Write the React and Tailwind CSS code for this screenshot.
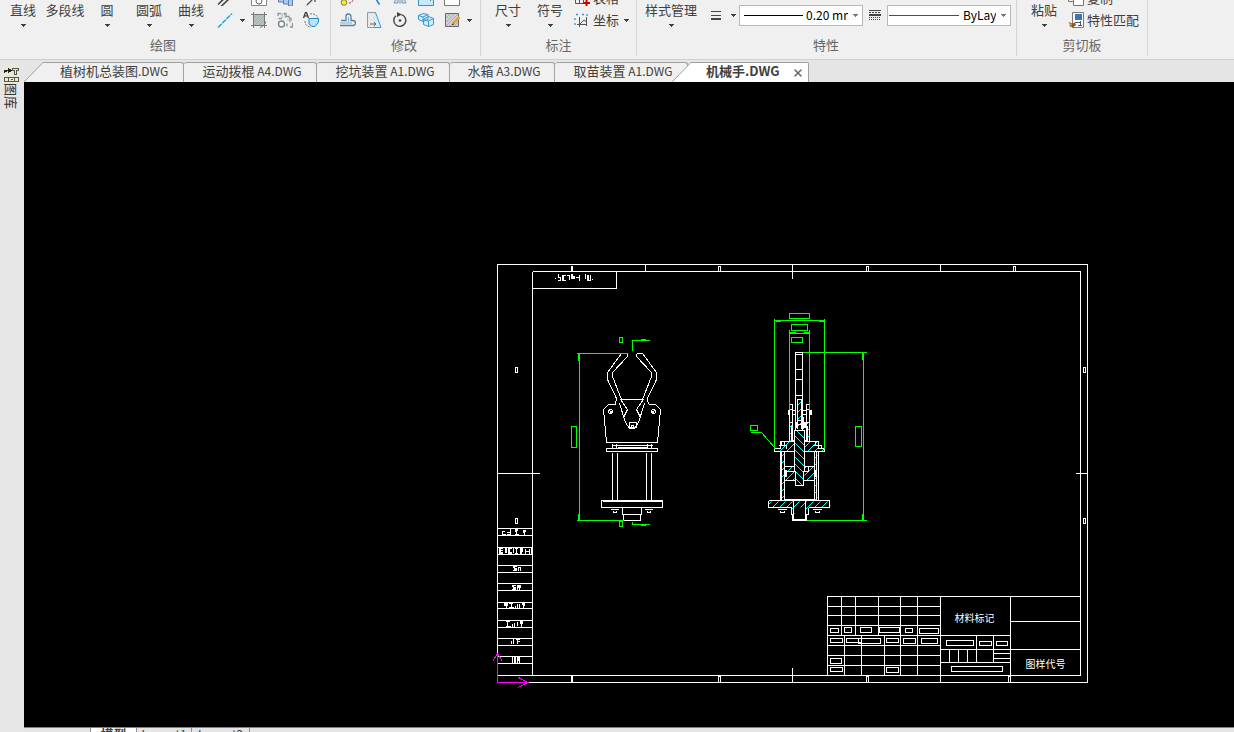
import React, { useState } from 'react';
import { X } from 'lucide-react';

const tabs = [
  { name: '植树机总装图', ext: '.DWG', width: 'w-[140px]' },
  { name: '运动拨棍', ext: ' A4.DWG', width: 'w-[133px]' },
  { name: '挖坑装置', ext: ' A1.DWG', width: 'w-[133px]' },
  { name: '水箱', ext: ' A3.DWG', width: 'w-[105px]' },
  { name: '取苗装置', ext: ' A1.DWG', width: 'w-[133px]' },
];

const Caret = ({ color = '#404040' }) => (
  <svg width="5" height="3" viewBox="0 0 5 3" className="shrink-0" shapeRendering="crispEdges">
    <path d="M0 0h5v1H4v1H3v1H2V2H1V1H0z" fill={color} />
  </svg>
);

const Icon = ({ children }) => (
  <svg width="16" height="16" viewBox="0 0 16 16" fill="none" stroke="#5b6670" className="shrink-0">
    {children}
  </svg>
);

const icons = {
  ray: (
    <Icon><path d="M1 15.500 15 1.500" stroke="#1ba3e0" strokeWidth="1.500" strokeDasharray="5 1" /></Icon>
  ),
  parallel: (
    <Icon><path d="M1 14.500 11 5M4 16.500 13 8" stroke="#444" strokeWidth="1.600" /></Icon>
  ),
  hatch: (
    <Icon>
      <path d="M3 3h10v10H3z" fill="#b9c0c0" stroke="none" />
      <path d="M0 2.500h16M0 13.500h16M2.500 0v16M13.500 0v16" stroke="#777" />
      <path d="M3 6l3-3M3 10l7-7M4 13l9-9M8 13l5-5" stroke="#a3adad" />
      <path d="M9 15.500c3-1 5-3 6-6" stroke="#777" />
    </Icon>
  ),
  wipeout: (
    <Icon>
      <path d="M.5 0v15.500h15V0" fill="#fff" stroke="#888" />
      <circle cx="8" cy="11" r="3" />
    </Icon>
  ),
  blocks: (
    <Icon><path d="M1.500 3v9h5v2h5v2h4V4" fill="#a9cbea" stroke="#5b7fa6" /><path d="M6.500 3v9M11.500 3v11" stroke="#5b7fa6" /></Icon>
  ),
  arrow: (
    <Icon><path d="M4 15 13 6M8 8h4v4" stroke="#444" strokeWidth="1.200" /></Icon>
  ),
  gears: (
    <Icon>
      <path d="M1 4V1.500h3M7 1.500h2v3h3V6M12 6.500h2V9M15.500 11v4H13M10 14.500v-3M1.500 6.500H5" stroke="#8a949b" strokeWidth="1.300" />
      <path d="M5 6V2h3v4M10 8h3v3" stroke="#a0a9af" />
      <circle cx="4.500" cy="12" r="3" fill="#f4f6f7" stroke="#7b858d" strokeWidth="1.400" />
    </Icon>
  ),
  region: (
    <Icon>
      <path d="M7 2c5-1 8 2 8 6M2 9c0 4 3 6 6 6" stroke="#777" strokeDasharray="2 1" />
      <path d="M6 6.500h9.500V10L12 14.500H9L6 12z" fill="#b5e3fa" stroke="#2786bf" />
      <path d="M.5 6 2.500.500h1L5.500 6M1.500 4h3" stroke="#333" strokeWidth="1.200" />
    </Icon>
  ),
  yellow: (
    <Icon><circle cx="4" cy="12.500" r="2.800" fill="#fff200" stroke="#777" /><path d="M9 13c3 0 4-2 4-4" stroke="#b23a3a" strokeDasharray="2 1" /></Icon>
  ),
  slash: (
    <Icon><path d="M8 6 13.500 14.500" stroke="#2277cc" strokeWidth="1.400" /></Icon>
  ),
  mirror: (
    <Icon><path d="M6 5v8H2zM10 5v8h4z" fill="#d4dfe8" stroke="#7897b0" /><path d="M8 3v11" stroke="#888" /></Icon>
  ),
  blueBox: (
    <Icon><path d="M.5 5v10.500h15V5" fill="#c6eafa" stroke="#3c8fc0" /><path d="M12.500 5v6" stroke="#3c8fc0" /></Icon>
  ),
  whiteBox: (
    <Icon><path d="M.5 4v11.500h15V4" fill="#fff" stroke="#777" /></Icon>
  ),
  offset: (
    <Icon>
      <path d="M0 13.500h13a2.300 2.300 0 0 0 0-5h-2V4.500a2.500 2.500 0 0 0-5 0v4H1" stroke="#5d7f9a" strokeWidth="1.300" />
      <path d="M0 11h12M8.500 5v5" stroke="#6cb8e6" />
    </Icon>
  ),
  stretch: (
    <Icon>
      <path d="M1.500.500h8v15h-8z" fill="#e8e8e8" stroke="#999" />
      <path d="M9.500.500 15 15.500H7" fill="#d4effb" stroke="#3c9ad0" />
      <path d="M4 12h6M8 10l2 2-2 2" stroke="#666" />
    </Icon>
  ),
  rotate: (
    <Icon>
      <path d="M4 3.700A6 6 0 1 0 9.500 2.600" stroke="#444" strokeWidth="1.400" />
      <path d="M5 0v5l5-2.500z" fill="#444" stroke="none" />
      <circle cx="8" cy="8.500" r="1.300" fill="#444" stroke="none" />
    </Icon>
  ),
  array: (
    <Icon>
      <path d="M.5 3.500 5 1.500l5 1v5l-5 2-4.500-2zM5.500 7.500l5-3 5 2v6l-5 2-5-2z" fill="#d2edfa" stroke="#3998ce" />
      <path d="M.5 3.500 5 5l5-2.500M5 5v4M5.500 7.500l5 1.500 5-2.500M10.500 9v5.500" stroke="#3998ce" />
    </Icon>
  ),
  edit: (
    <Icon>
      <path d="M1.500 1.500h13v13h-13z" fill="#d0d0d0" stroke="#666" />
      <path d="M2 6l4-4M2 10l8-8M2 14 14 2M6 14l8-8M10 14l4-4" stroke="#aaa" />
      <path d="M9 11.500 15.500 5" stroke="#e7a13d" strokeWidth="2.500" />
      <path d="M8 12.500l2-.5" stroke="#333" />
    </Icon>
  ),
  table: (
    <Icon>
      <path d="M1.500 3v10.500h12M1.500 9.500h12M5.500 3v10M9.500 3v10" stroke="#555" />
      <path d="M9 13h7M12.500 9.500v7" stroke="#d40000" strokeWidth="2" />
    </Icon>
  ),
  coord: (
    <Icon>
      <path d="M5.500 5v10M3 12.500h9M6 12l4-4 3 2M12.500 5v9" stroke="#555" />
      <path d="M2 2.500h3M8 2.500h2M13 2v3M1 6v2M1 11v3" stroke="#3b95cc" strokeWidth="1.300" strokeDasharray="2 1" />
    </Icon>
  ),
  copy: (
    <Icon><path d="M.500 2v9.500h5" stroke="#777" /><path d="M5.500 4v11.500h10V4" fill="#fff" stroke="#777" /></Icon>
  ),
  match: (
    <Icon>
      <path d="M4.500.500h11v15h-11z" fill="#fff" stroke="#777" />
      <path d="M7 2h7v6H7z" fill="#3878b8" stroke="none" />
      <path d="M7 10.500h5M10 13.500h4M12.500 9v4" stroke="#456" />
      <path d="M1 10l3 1.500 3-1 1 2.500-3 2.500-3-1z" fill="#9b5418" stroke="none" />
      <path d="M0 10.500l4 3" stroke="#d9c09a" />
    </Icon>
  ),
};

const BigButton = ({ label, caret = true, className = 'w-[42px]' }) => (
  <button type="button" className={`flex h-[44px] flex-col items-center justify-end whitespace-nowrap ${className}`}>
    <span className="pb-px leading-[18px]">{label}</span>
    <span className="flex h-[11px] items-center">{caret && <Caret />}</span>
  </button>
);

const IconButton = ({ icon, label }) => (
  <button type="button" aria-label={label} className="flex h-[22px] w-[26px] items-center justify-center">
    {icons[icon]}
  </button>
);

const CaretButton = ({ label }) => (
  <button type="button" aria-label={label} className="flex h-[22px] w-2 items-center justify-center">
    <Caret />
  </button>
);

const TextButton = ({ icon, label, caret }) => (
  <button type="button" className="flex h-[22px] items-center gap-[3px] whitespace-nowrap">
    {icons[icon]}
    {label}
    {caret && <span className="pl-0.5"><Caret /></span>}
  </button>
);

const Group = ({ title, className, children }) => (
  <section className={`flex shrink-0 flex-col justify-end border-r border-[#d4d4d4] ${className}`}>
    <div className="flex items-end">{children}</div>
    <h2 className="mt-[5px] pb-0.5 text-center leading-[18px] text-[#666]">{title}</h2>
  </section>
);

const LineSelect = ({ label, value, sample, pad }) => (
  <div className="relative h-[21px] w-[124px]">
    <select
      aria-label={label}
      className={`h-full w-full appearance-none overflow-hidden border border-[#b8b8b8] bg-white pr-3.5 text-[12px] text-black ${pad}`}
    >
      <option>{value}</option>
    </select>
    <span className={`pointer-events-none absolute top-[10px] border-t ${sample}`} />
    <span className="pointer-events-none absolute top-[9px] right-[5px] flex"><Caret color="#777" /></span>
  </div>
);

const Ribbon = () => (
  <header className="flex h-[60px] items-end overflow-hidden border-b border-[#d0d0d0] bg-[#f0f0f0] pb-[3px] text-[13px] text-[#404040]">
    <Group title="绘图" className="pr-1.5 pl-0.5">
      <BigButton label="直线" />
      <BigButton label="多段线" caret={false} />
      <BigButton label="圆" />
      <BigButton label="圆弧" />
      <BigButton label="曲线" />
      <div>
        <div className="flex">
          <IconButton icon="parallel" label="平行线" />
          <span className="w-2" />
          <IconButton icon="wipeout" label="区域覆盖" />
          <IconButton icon="blocks" label="图块" />
          <IconButton icon="arrow" label="箭头" />
        </div>
        <div className="flex">
          <IconButton icon="ray" label="中心线" />
          <CaretButton label="更多中心线" />
          <IconButton icon="hatch" label="剖面线" />
          <IconButton icon="gears" label="齿形" />
          <IconButton icon="region" label="局部放大" />
        </div>
      </div>
    </Group>
    <Group title="修改" className="pr-[7px] pl-1">
      <div>
        <div className="flex">
          <IconButton icon="yellow" label="删除" />
          <IconButton icon="slash" label="裁剪" />
          <IconButton icon="mirror" label="镜像" />
          <IconButton icon="blueBox" label="缩放" />
          <IconButton icon="whiteBox" label="打断" />
        </div>
        <div className="flex">
          <IconButton icon="offset" label="等距线" />
          <IconButton icon="stretch" label="拉伸" />
          <IconButton icon="rotate" label="旋转" />
          <IconButton icon="array" label="阵列" />
          <IconButton icon="edit" label="剖面线编辑" />
          <CaretButton label="更多编辑" />
        </div>
      </div>
    </Group>
    <Group title="标注" className="px-1.5">
      <BigButton label="尺寸" />
      <BigButton label="符号" />
      <div className="pr-px pl-[3px]">
        <TextButton icon="table" label="表格" />
        <TextButton icon="coord" label="坐标" caret />
      </div>
    </Group>
    <Group title="特性" className="pr-[5px] pl-1">
      <BigButton label="样式管理" className="w-[60px]" />
      <div className="flex items-center pb-[5px] pl-1">
        <button type="button" aria-label="线宽" className="flex h-[21px] w-[22px] items-center justify-center">
          <svg width="10" height="9" viewBox="0 0 10 9" fill="#444" shapeRendering="crispEdges">
            <path d="M0 0h10v1H0zM0 4h10v1H0zM0 7h10v2H0z" />
          </svg>
        </button>
        <span className="flex px-0.5"><CaretButton label="线宽选项" /></span>
        <LineSelect label="线宽" value="0.20 mm" sample="left-[5px] w-[59px] border-black" pad="pl-[66px]" />
        <button type="button" aria-label="线型" className="flex h-[21px] w-[24px] items-center justify-center">
          <svg width="12" height="10" viewBox="0 0 12 10" fill="none" stroke="#444" shapeRendering="crispEdges">
            <path d="M0 .5h12M0 4.500h12M0 5.500h12" />
            <path d="M0 2.500h12" strokeDasharray="2 1" />
            <path d="M0 7.500h12M0 9.500h12" strokeDasharray="1 1" />
          </svg>
        </button>
        <LineSelect label="线型" value="ByLayer" sample="left-0.5 w-[70px] border-[#ff0000]" pad="pl-[75px]" />
      </div>
    </Group>
    <Group title="剪切板" className="pr-1.5 pl-1.5">
      <BigButton label="粘贴" />
      <div className="pr-0.5 pl-[3px]">
        <TextButton icon="copy" label="复制" />
        <TextButton icon="match" label="特性匹配" />
      </div>
    </Group>
  </header>
);

const Slant = ({ fill }) => (
  <svg width="20" height="20" viewBox="0 0 20 20" className="shrink-0">
    <path d="M0 20 19 .5H20V20z" fill={fill} />
    <path d="M0 20 19 .5H20" fill="none" stroke="#a0a0a0" />
  </svg>
);

const DocumentTabs = ({ active, onSelect }) => (
  <nav className="flex h-[22px] items-end bg-[#e5e5e5] text-[13px] text-[#404040]">
    <Slant fill="#f0f0f0" />
    {tabs.map((tab, i) => (
      <button
        key={tab.name}
        type="button"
        onClick={() => onSelect(tab.name)}
        className={`flex h-5 shrink-0 items-center border-t border-r border-[#a0a0a0] bg-[#f0f0f0] pb-[3px] whitespace-pre ${tab.width} ${i ? 'justify-center rounded-t-[3px] pl-1' : 'rounded-tr-[3px] pl-4'}`}
      >
        {tab.name}
        <span className="text-[12px]">{tab.ext}</span>
      </button>
    ))}
    <div className="relative -ml-4 flex h-5">
      <Slant fill="#fff" />
      <div className="flex w-[117px] items-center justify-between rounded-tr-[2px] border-t border-r border-[#a0a0a0] bg-white pr-1 pl-3.5">
        <button type="button" className="pb-[3px] font-bold whitespace-nowrap" aria-current={active === '机械手'} onClick={() => onSelect('机械手')}>
          机械手.DWG
        </button>
        <button type="button" aria-label="关闭">
          <X className="h-3 w-3 text-[#666]" strokeWidth={3} />
        </button>
      </div>
    </div>
  </nav>
);

// x, y, right, bottom of the cells that hold collapsed text
const titleCells = [
  [830, 628, 838, 632], [844, 627, 851, 632], [860, 627, 871, 632], [879, 627, 899, 632],
  [905, 628, 912, 632], [919, 628, 938, 633], [830, 638, 842, 642], [846, 638, 861, 642],
  [858, 638, 880, 643], [886, 638, 898, 642], [903, 638, 915, 643], [921, 638, 937, 643],
  [830, 658, 841, 663], [830, 667, 842, 671], [886, 667, 898, 672], [946, 640, 973, 645],
  [979, 641, 991, 645], [996, 641, 1007, 645], [951, 666, 1002, 671],
];

const zoneMarks = [
  [571, 266, 572, 271], [718, 266, 720, 271], [866, 266, 868, 271], [1013, 266, 1015, 271],
  [571, 676, 572, 682], [718, 676, 720, 682], [866, 676, 868, 682], [1008, 676, 1010, 682],
  [515, 367, 517, 372], [515, 518, 517, 523], [1083, 367, 1085, 372], [1083, 518, 1085, 523],
];

const greenBoxes = [
  [619, 337, 622, 342], [571, 426, 576, 447], [619, 521, 622, 526], [789, 313, 809, 318],
  [791, 324, 807, 330], [791, 337, 802, 342], [855, 426, 861, 446], [750, 425, 757, 430],
];

const sideRows = [528, 535, 547, 554, 565, 572, 583, 590, 602, 608, 620, 627, 638, 645, 656, 663];

const hatchLines = Array.from({ length: 34 }, (_, i) => 630 + i * 7);

const Boxes = ({ items }) => items.map(([x, y, r, b]) => (
  <rect key={`${x}-${y}`} x={x} y={y} width={r - x} height={b - y} />
));

// Left half of the gripper, mirrored for the right one
const Jaw = () => (
  <g>
    <path d="M627 353h-6L607 372v7l9 19-1 6M627 353v3L612 372v4l9 23" />
    <path d="M620 399l7 10-4 8M619 403l6 19 4 6h3M620 399h12" />
    <path d="M615 404h-7l-5 5 3 33h26" />
    <circle cx="610" cy="411" r="2" />
    <path d="M609 410l3 3M612 410l-3 3" />
    <path d="M612 443v5M616 443v5M611 445h21M632 448h-26v3h26M617 447h15M612 452v48M617 452v48" />
    <path d="M632 500h-31v7h31M602 501h30M611 508v1h7v-1M613 510v2h3v-2M622 507v7M632 514h-9v6h9" />
  </g>
);

const FrontView = () => (
  <g>
    <Jaw />
    <g transform="translate(1263 0) scale(-1 1)"><Jaw /></g>
    <path d="M629 422h7v5h-7z" />
    <circle cx="632" cy="426" r="1" />
  </g>
);

const SideView = () => (
  <g>
    <g stroke="#00ffff" clipPath="url(#section)">
      {hatchLines.map((x) => <path key={x} d={`M${x} 530l140-140`} />)}
    </g>
    <path d="M794 430h10v41h-1v14h-8v-14h-1z" fill="#000" stroke="none" />
    <g stroke="#00ffff" clipPath="url(#shaft)">
      {hatchLines.map((x) => <path key={x} d={`M${x} 390l140 140`} />)}
    </g>
    <path d="M787 409h2v5h-2zM809 409h2v5h-2zM794 421h2v6h-2zM803 421h2v6h-2zM784 469h2v7h-2zM813 469h2v7h-2zM801 416h2v12h-2z" fill="#fff" stroke="none" />
    <path d="M795 430V352h7v78M795 354h7M795 369h7M795 379h7M795 395h7M797 428v-29h4v29" />
    <path d="M789 441v-37h3v35M789 409h3M806 439v-35h3v37M806 409h3M792 410h3M792 414h3M802 410h4M802 414h4M789 422h3M806 422h3M794 424h10M797 420h6" />
    <path d="M791 425v15h3M807 425v15h-3M794 430h10v41h-1v14h-8v-14h-1z" />
    <path d="M794 441h-14v7h-6v3h20M804 441h14v7h6v3h-20M781 441h3v4h-3zM778 445h8v3M815 441h3v4h-3zM812 445h9v3" />
    <path d="M780 451v49M781 451v49M784 451v49M814 451v49M816 451v49M818 451v49" />
    <path d="M784 466h10M784 480h11M784 471h10M804 466h10M803 480h11M808 466v5h-4M784 499h30" />
    <path d="M768 500h61v7h-21M768 500v7h23M791 507v7h1v6h14v-6h2v-7M793 500v19M805 500v19M792 519h14" />
    <path d="M778 508v1h8v-1M780 510v2h4v-2M813 508v1h8v-1M815 510v2h4v-2" />
  </g>
);

const PlottedText = () => (
  <g stroke="none" fill="#fff" transform="translate(-.5 -.5)">
    <path d="M555 278h1v1h-1zM558 274h1v3h2v4h-3v-1h2v-2h-2zM562 275h4v1h-2v4h2v1h-4zM567 275h3v5h-1v-4h-2zM571 274h2v2h2v3h-4zM576 277h3v-2h1v6h-1v-3h-3zM585 274h1v5h-1zM587 275h2v5h1v-5h1v6h-4zM592 279h1v1h-1z" />
    <path d="M502 531h3v1h-2v2h3v1h-4zM507 532h3v-3h1v6h-4v-1h3v-1h-3zM515 529h3v2h-1v3h2v1h-4v-1h1v-2h-1zM523 530h3v2h-1v3h-1v-2h-1z" />
    <path d="M499 548h4v1h-2v1h2v1h-2v1h2v2h-4zM505 548h2v5h-2zM508 548h4v1h-2v3h2v2h-4zM513 548h1v5h-1zM515 548h3v1h-1v4h1v1h-3v-1h1v-4h-1zM520 548h3v4h-1v2h-2zM525 549h1v2h3v-2h1v5h-1v-2h-3v2h-1zM531 548h1v6h-1z" />
    <path d="M513 566h4v1h-2v1h2v3h-4v-1h1v-2h-1zM518 567h3v4h-1v-3h-1v3h-1z" />
    <path d="M512 585h4v1h-2v1h2v3h-4v-1h1v-2h-1zM517 585h4v3h-1v2h-1v-2h-1v2h-1z" />
    <path d="M504 603h4v3h-1v2h-1v-2h-2zM509 603h4v1h-1v3h2v1h-5v-1h2v-3h-2zM515 606h1v2h-1zM517 604h1v4h-1zM519 604h1v4h-1zM522 602h3v4h-1v2h-1v-3h-1z" />
    <path d="M506 621h4v1h-2v4h3v1h-5v-1h1v-4h-1zM512 624h1v3h-1zM514 623h1v4h-1zM517 622h1v4h-1zM520 620h3v4h-1v3h-1v-3h-1z" />
    <path d="M511 641h1v3h-1zM513 639h1v5h-1zM516 639h4v1h-2v1h2v1h-2v2h-1v-4h-1z" />
    <path d="M512 657h1v6h-1zM514 657h2v6h-2zM517 657h3v6h-1v-2h-1v2h-1z" />
  </g>
);

const Drawing = () => (
  <svg
    viewBox="23.5 81.5 1210 645"
    className="min-h-0 w-full flex-1 bg-black"
    fill="none"
    stroke="#fff"
    shapeRendering="crispEdges"
    role="img"
    aria-label="机械手"
  >
    <defs>
      <clipPath id="section">
        <path d="M774 448h6v-7h14v10h-20zM804 441h14v7h6v3h-20zM768 501h62v6h-62zM781 451h3v49h-3zM814 451h3v49h-3z" />
        <path d="M784 466h10v14h-10zM804 466h10v14h-10zM789 420h3v20h-3zM806 420h3v20h-3zM797 399h4v30h-4z" />
        <path d="M791 507h3v12h-2zM805 507h3l-2 12z" />
      </clipPath>
      <clipPath id="shaft">
        <path d="M794 430h10v41h-1v14h-8v-14h-1z" />
      </clipPath>
    </defs>

    <path d="M497 264h590v418H497zM532 271h548v404H497M532 271v404M532 288h84v-17" />
    <path d="M645 264v7M792 264v14M940 264v7M792 667v15M497 473h42M1075 473h12" />
    <Boxes items={zoneMarks} />
    {sideRows.map((y) => <path key={y} d={`M497 ${y}h35`} />)}

    <path d="M827 675v-79h253M940 596v86M1010 596v79M827 606h113M827 615h113M827 625h113M827 635h183M827 645h113M827 655h113M827 665h113" />
    <path d="M841 596v39M855 596v39M878 596v39M900 596v79M917 596v79M844 635v40M861 635v40M884 635v40" />
    <path d="M1010 621h70M940 649h140M940 662h70M976 635v27M993 635v27M949 649v13M958 649v13M967 649v13M993 653h17M993 658h17" />
    <Boxes items={titleCells} />
    <g stroke="none" fill="#fff" fontSize="10">
      <text x="954" y="621">材料标记</text>
      <text x="1025" y="667">图样代号</text>
    </g>
    <PlottedText />

    <FrontView />
    <SideView />

    <g stroke="#00ff00">
      <Boxes items={greenBoxes} />
      <path d="M632 350v-10h17M640 339h5M632 521v3h17M640 525h5" />
      <path d="M576 353h51M579 353v167M576 520h47M578 353v7M578 513v7" />
      <path d="M774 318v130M824 318v130M774 320h50M775 321h5M818 321h6" />
      <path d="M789 329v80M809 329v80M789 333h20M789 332h6M803 332h6" />
      <path d="M802 352h64M863 352v168M806 520h60M862 352v7M862 513v7" />
      <path d="M750 432h11l13 15" />
    </g>

    <path d="M497 652v30h30M492 661l5-8 5 8M518 677l9 5-9 5" stroke="#ff00ff" />
  </svg>
);

const LayoutTabs = () => (
  <footer className="flex h-[5px] shrink-0 overflow-hidden border-t border-[#808080] bg-[#e5e5e5] pl-[66px] text-[12px] leading-3 text-[#404040]">
    <button type="button" className="h-3 w-[47px] rounded-bl-lg border-x border-[#909090] bg-white text-[13px] font-bold">模型</button>
    <button type="button" className="h-3 w-[55px] border-r border-[#909090]">Layout1</button>
    <button type="button" className="h-3 w-[58px] border-r border-[#909090]">Layout2</button>
  </footer>
);

const App = () => {
  const [active, setActive] = useState('机械手');

  return (
    <div className="flex h-screen flex-col overflow-hidden bg-[#e5e5e5] font-['Noto_Sans_CJK_SC',sans-serif]">
      <Ribbon />
      <div className="flex min-h-0 flex-1">
        <aside className="flex w-6 shrink-0 flex-col items-center bg-[#e6e6e6] pt-1.5 pr-0.5 text-[#333]">
          <button type="button" className="flex flex-col items-center">
            <svg width="15" height="17" viewBox="0 0 15 17" fill="none" stroke="#222" shapeRendering="crispEdges">
              <path d="M0 0h15v17H0z" fill="#ebe9cf" stroke="none" />
              <path d="M.5 7V4.500H5M4 2v5l3-2.500z" fill="#222" />
              <path d="M8.500 2V4.500h2v4h2v-4h2V2z" stroke="#555" />
              <path d="M.5 11.500h14v4H.500zM4.500 11.500v4M10.500 11.500v4M7 13.500h2" stroke="#555" />
            </svg>
            <span className="text-[13px] leading-[14px] [text-orientation:sideways] [writing-mode:vertical-rl]">图库</span>
          </button>
        </aside>
        <div className="flex min-w-0 flex-1 flex-col">
          <DocumentTabs active={active} onSelect={setActive} />
          <Drawing />
          <LayoutTabs />
        </div>
      </div>
    </div>
  );
};

export default App;
